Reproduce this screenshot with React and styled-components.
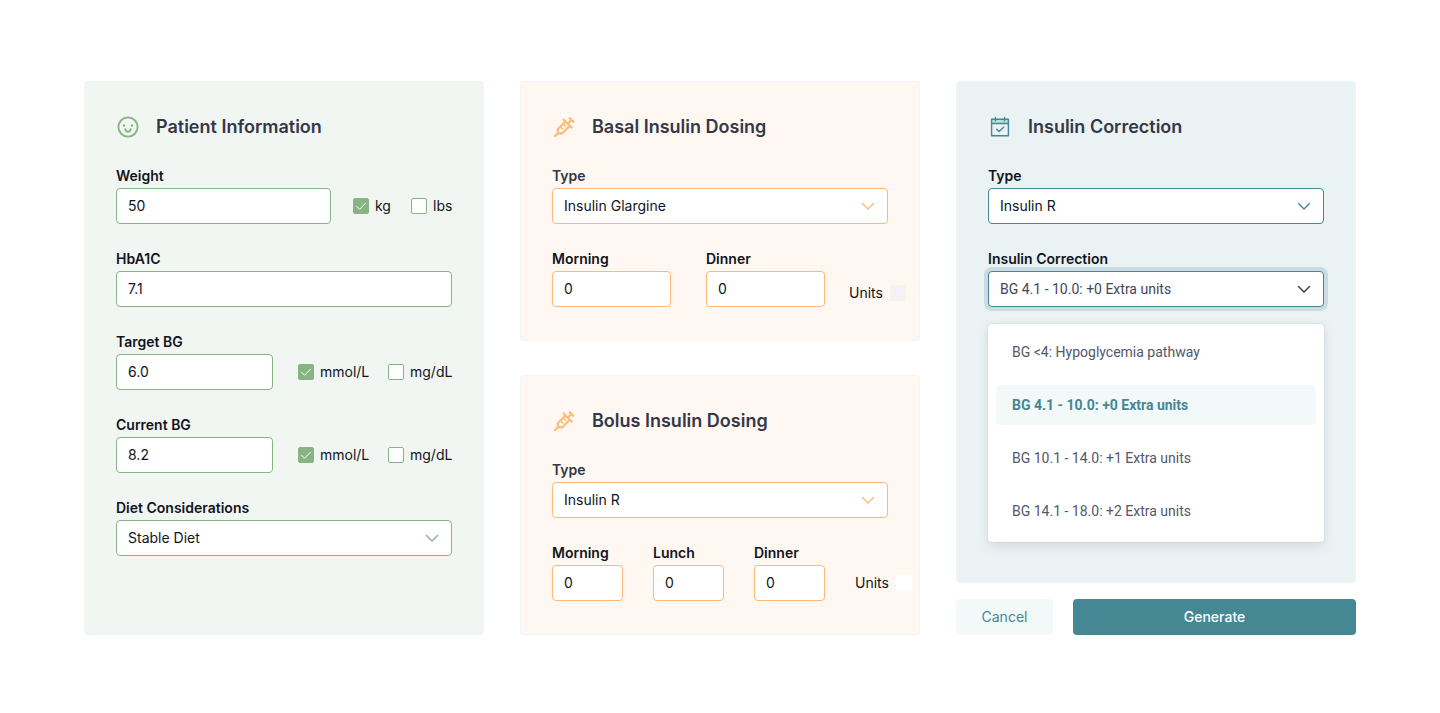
import React, { useState } from 'react';
import styled, { createGlobalStyle } from 'styled-components';

const green = '#87b482';
const orange = '#ffb974';
const teal = '#458793';

const GlobalStyle = createGlobalStyle`
  * {
    box-sizing: border-box;
  }
  body {
    margin: 0;
    background: #fff;
    color: #11141c;
    font-family: Inter, 'Open Sans', sans-serif;
    font-size: 14px;
    line-height: 24px;
  }
  input, select, button {
    font: inherit;
    color: inherit;
    margin: 0;
  }
`;

const Page = styled.main`
  display: grid;
  grid-template-columns: repeat(3, 1fr);
  gap: 36px;
  padding: 81px 84px;

  @media screen and (max-width: 1100px) {
    grid-template-columns: 1fr;
    padding: 32px;
  }
`;

const Column = styled.div`
  display: flex;
  flex-direction: column;
  gap: ${({ $gap }) => $gap || 0}px;
`;

const Card = styled.section`
  flex: 1;
  padding: 33px 31px;
  border: 1px solid ${({ $border }) => $border};
  border-radius: 4px;
  background: ${({ $fill }) => $fill};
`;

const Header = styled.header`
  display: flex;
  align-items: center;
  gap: 16px;
  margin-bottom: 25px;

  & svg {
    flex: none;
  }
`;

const Title = styled.h2`
  margin: 0;
  color: #343747;
  font-size: 18px;
  font-weight: 600;
  line-height: 24px;
`;

const Fields = styled.div`
  display: grid;
  gap: 23px;
`;

const Row = styled.div`
  display: flex;
  flex: 1;
  align-items: flex-end;
  gap: ${({ $gap }) => $gap}px;
`;

const StyledField = styled.div`
  position: relative;
  flex: 1;
  min-width: 0;

  & > label {
    display: block;
    color: ${({ $muted }) => ($muted ? '#343747' : 'inherit')};
    font-weight: 600;
  }
`;

const TextBox = styled.input`
  display: block;
  width: 100%;
  height: 36px;
  padding: 0 11px 2px;
  border: 1px solid ${({ $color }) => $color};
  border-radius: 4px;
  outline: none;
  background: #fff;
`;

const SelectWrapper = styled.div`
  display: grid;
  align-items: center;

  & > * {
    grid-area: 1 / 1;
  }
  & > svg {
    justify-self: end;
    margin-right: 12px;
    pointer-events: none;
  }
`;

const SelectBox = styled.select`
  appearance: none;
  width: 100%;
  height: 36px;
  padding: 0 32px 0 11px;
  border: 1px solid ${({ $color }) => $color};
  border-radius: 4px;
  outline: none;
  background: #fff;
  color: ${({ $open }) => ($open ? '#42465a' : 'inherit')};
  font-family: ${({ $open }) => ($open ? 'Roboto, sans-serif' : 'inherit')};
  box-shadow: ${({ $open }) => ($open ? '0 0 0 4px #cadce1' : 'none')};
`;

const Checks = styled.div`
  display: grid;
  grid-template-columns: ${({ $columns }) => $columns};
  align-items: center;
  height: 36px;
`;

const CheckLabel = styled.label`
  display: flex;
  align-items: center;
  gap: 6px;
  white-space: nowrap;
`;

const CheckMark = styled.span`
  display: grid;
  flex: none;
  width: 16px;
  height: 16px;

  & > * {
    grid-area: 1 / 1;
  }
  & > svg {
    pointer-events: none;
  }
`;

const CheckInput = styled.input`
  appearance: none;
  width: 16px;
  height: 16px;
  border: 1px solid ${green};
  border-radius: 2px;
  background: #fff;

  &:checked {
    background: ${green};
  }
`;

const UnitsLabel = styled.label`
  display: flex;
  flex: none;
  align-items: center;
  gap: 7px;
  width: ${({ $width }) => $width}px;
  height: ${({ $height }) => $height}px;
`;

const UnitsInput = styled.input`
  appearance: none;
  flex: none;
  width: 16px;
  height: 16px;
  border: ${({ $dotted }) => ($dotted ? '4px solid #f5f3ef' : '0')};
  border-radius: 2px;
  background: ${({ $dotted }) => ($dotted ? '#f3effc' : '#fff')};
`;

const Menu = styled.ul`
  position: absolute;
  top: calc(100% + 17px);
  left: 0;
  right: 0;
  display: grid;
  gap: 13px;
  margin: 0;
  padding: 8px 8px 11px;
  border-radius: 4px;
  background: #fff;
  box-shadow: 0 4px 12px rgba(40, 50, 60, 0.12), 0 0 2px rgba(40, 50, 60, 0.16);
  font-family: Roboto, sans-serif;
  list-style: none;
`;

const MenuItem = styled.li`
  padding: 8px 16px;
  border-radius: 4px;
  background: ${({ $active }) => ($active ? '#f3f9f9' : 'transparent')};
  color: ${({ $active }) => ($active ? teal : '#535769')};
  font-weight: ${({ $active }) => ($active ? 700 : 400)};
  cursor: pointer;
`;

const Actions = styled.div`
  display: flex;
  gap: 20px;
`;

const ActionButton = styled.button`
  flex: ${({ $primary }) => ($primary ? '1' : '0 0 97px')};
  height: 36px;
  padding: 0;
  border: 0;
  border-radius: 4px;
  background: ${({ $primary }) => ($primary ? teal : '#f3f9f9')};
  color: ${({ $primary }) => ($primary ? '#fff' : teal)};
  font-weight: ${({ $primary }) => ($primary ? 500 : 400)};
`;

const Chevron = ({ color }) => (
  <svg width="16" height="16" viewBox="0 0 16 16" fill="none" stroke={color} strokeWidth="1.4" strokeLinecap="round" strokeLinejoin="round">
    <path d="M2.500 5.500 8 11l5.500-5.500" />
  </svg>
);

const FaceIcon = () => (
  <svg width="24" height="24" viewBox="0 0 24 24" fill="none" stroke={green} strokeWidth="1.9" strokeLinecap="round">
    <circle cx="12" cy="12" r="9.6" />
    <path d="M9.300 14.300c.2 1.500 1.200 2.300 2.700 2.300s2.500-.8 2.700-2.300" />
    <circle cx="8" cy="10.500" r="1.200" fill={green} stroke="none" />
    <circle cx="16" cy="10.500" r="1.200" fill={green} stroke="none" />
  </svg>
);

const SyringeIcon = () => (
  <svg width="24" height="24" viewBox="0 0 24 24" fill="none" stroke={orange} strokeWidth="2.100">
    <path d="M2.400 21.800 7 17.200M17 2.400l5 5M19.500 4.900l-3.200 3.200M11 3.900l9.300 9.300M13.500 6.400l-7.700 7.700v4.300h4.300l7.700-7.700" />
    <path d="m8.800 12.200 2.200 2.200M11.500 9.500l2.200 2.200" strokeWidth="1.600" />
  </svg>
);

const CalendarIcon = () => (
  <svg width="24" height="24" viewBox="0 0 24 24" fill="none" stroke={teal} strokeWidth="1.400" strokeLinecap="round" strokeLinejoin="round">
    <path d="M3.600 4.200h16.800v4.300H3.600z" fill="#c3dadf" stroke="none" />
    <path d="M3.600 4.200h16.800v16.500H3.600zM3.600 8.500h16.800M7.500 2.500v3.200M16.500 2.500v3.200M8.700 14.300l2.400 2.300 4.600-4.300" />
  </svg>
);

const TickIcon = () => (
  <svg width="16" height="16" viewBox="0 0 16 16" fill="none" stroke="#fff" strokeLinecap="round" strokeLinejoin="round">
    <path d="m3.500 8.200 3.100 3.100 5.900-6.200" />
  </svg>
);

const InputField = ({ id, label, value, color }) => (
  <StyledField>
    <label htmlFor={id}>{label}</label>
    <TextBox id={id} type="text" defaultValue={value} $color={color} />
  </StyledField>
);

const SelectField = ({ id, label, options, color, muted }) => (
  <StyledField $muted={muted}>
    <label htmlFor={id}>{label}</label>
    <SelectWrapper>
      <SelectBox id={id} $color={color}>
        {options.map(option => (
          <option key={option}>{option}</option>
        ))}
      </SelectBox>
      <Chevron color={color} />
    </SelectWrapper>
  </StyledField>
);

const UnitChecks = ({ name, units, columns }) => {
  const [selected, setSelected] = useState(units[0]);

  return (
    <Checks $columns={columns}>
      {units.map(unit => (
        <CheckLabel key={unit} htmlFor={`${name}-${unit}`}>
          <CheckMark>
            <CheckInput
              id={`${name}-${unit}`}
              type="checkbox"
              checked={selected === unit}
              onChange={() => setSelected(unit)}
            />
            {selected === unit && <TickIcon />}
          </CheckMark>
          {unit}
        </CheckLabel>
      ))}
    </Checks>
  );
};

const corrections = [
  'BG <4: Hypoglycemia pathway',
  'BG 4.1 - 10.0: +0 Extra units',
  'BG 10.1 - 14.0: +1 Extra units',
  'BG 14.1 - 18.0: +2 Extra units',
];

const CorrectionField = () => {
  const [value, setValue] = useState(corrections[1]);

  return (
    <StyledField>
      <label htmlFor="correction">Insulin Correction</label>
      <SelectWrapper>
        <SelectBox id="correction" value={value} onChange={e => setValue(e.target.value)} $color={teal} $open>
          {corrections.map(item => (
            <option key={item}>{item}</option>
          ))}
        </SelectBox>
        <Chevron color="#343747" />
      </SelectWrapper>
      <Menu role="listbox" aria-label="Insulin Correction">
        {corrections.map(item => (
          <MenuItem
            key={item}
            role="option"
            aria-selected={item === value}
            $active={item === value}
            onClick={() => setValue(item)}
          >
            {item}
          </MenuItem>
        ))}
      </Menu>
    </StyledField>
  );
};

const App = () => (
  <>
    <GlobalStyle />
    <Page>
      <Column>
        <Card $fill="#f1f6f3" $border="#f0f5f4">
          <Header>
            <FaceIcon />
            <Title>Patient Information</Title>
          </Header>
          <Fields>
            <Row $gap={22}>
              <InputField id="weight" label="Weight" value="50" color={green} />
              <UnitChecks name="weight" units={['kg', 'lbs']} columns="58px 41px" />
            </Row>
            <InputField id="hba1c" label="HbA1C" value="7.1" color={green} />
            <Row $gap={25}>
              <InputField id="target" label="Target BG" value="6.0" color={green} />
              <UnitChecks name="target" units={['mmol/L', 'mg/dL']} columns="90px 64px" />
            </Row>
            <Row $gap={25}>
              <InputField id="current" label="Current BG" value="8.2" color={green} />
              <UnitChecks name="current" units={['mmol/L', 'mg/dL']} columns="90px 64px" />
            </Row>
            <SelectField id="diet" label="Diet Considerations" options={['Stable Diet']} color={green} />
          </Fields>
        </Card>
      </Column>

      <Column $gap={34}>
        <Card $fill="#fff7f1" $border="#f2f4f7">
          <Header>
            <SyringeIcon />
            <Title>Basal Insulin Dosing</Title>
          </Header>
          <Fields>
            <SelectField id="basal-type" label="Type" options={['Insulin Glargine']} color={orange} muted />
            <Row $gap={24}>
              <Row $gap={35}>
                <InputField id="basal-morning" label="Morning" value="0" color={orange} />
                <InputField id="basal-dinner" label="Dinner" value="0" color={orange} />
              </Row>
              <UnitsLabel htmlFor="basal-units" $width={39} $height={28}>
                Units
                <UnitsInput id="basal-units" type="checkbox" $dotted />
              </UnitsLabel>
            </Row>
          </Fields>
        </Card>
        <Card $fill="#fff7f1" $border="#f2f4f7">
          <Header>
            <SyringeIcon />
            <Title>Bolus Insulin Dosing</Title>
          </Header>
          <Fields>
            <SelectField id="bolus-type" label="Type" options={['Insulin R']} color={orange} muted />
            <Row $gap={30}>
              <InputField id="bolus-morning" label="Morning" value="0" color={orange} />
              <InputField id="bolus-lunch" label="Lunch" value="0" color={orange} />
              <InputField id="bolus-dinner" label="Dinner" value="0" color={orange} />
              <UnitsLabel htmlFor="bolus-units" $width={33} $height={36}>
                Units
                <UnitsInput id="bolus-units" type="checkbox" />
              </UnitsLabel>
            </Row>
          </Fields>
        </Card>
      </Column>

      <Column $gap={16}>
        <Card $fill="#eaf2f4" $border="#eff4f6">
          <Header>
            <CalendarIcon />
            <Title>Insulin Correction</Title>
          </Header>
          <Fields>
            <SelectField id="correction-type" label="Type" options={['Insulin R']} color={teal} />
            <CorrectionField />
          </Fields>
        </Card>
        <Actions>
          <ActionButton type="button">Cancel</ActionButton>
          <ActionButton type="submit" $primary>
            Generate
          </ActionButton>
        </Actions>
      </Column>
    </Page>
  </>
);

export default App;
